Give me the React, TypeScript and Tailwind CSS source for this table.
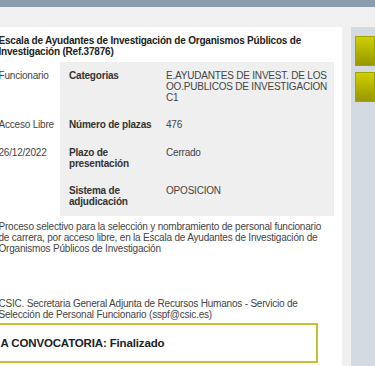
import React from 'react';

const rows = [
  { side: 'Funcionario', label: 'Categorias', value: 'E.AYUDANTES DE INVEST. DE LOS OO.PUBLICOS DE INVESTIGACION C1' },
  { side: 'Acceso Libre', label: 'Número de plazas', value: '476' },
  { side: '26/12/2022', label: 'Plazo de presentación', value: 'Cerrado' },
  { side: '', label: 'Sistema de adjudicación', value: 'OPOSICION' },
];

export default function App() {
  return (
    <div className="h-[366px] overflow-hidden bg-[#f0f0f0] font-['Liberation_Sans',Arial,sans-serif] text-[10px] leading-[11px] tracking-[-0.2px] text-[#444]">
      {/* top bar */}
      <div className="h-[7px] bg-[#8a9cad]" />

      <div className="flex pt-[20px] h-full">
        {/* main panel */}
        <div className="w-[342px] shrink-0 bg-white h-full pt-[7.5px]">
          <div className="-ml-[1.5px] w-[335px]">
            <h1 className="font-bold text-[#222] pr-[30px]">
              Escala de Ayudantes de Investigación de Organismos Públicos de Investigación (Ref.37876)
            </h1>

            <div className="mt-[5.5px]">
              {rows.map((r) => (
                <div key={r.label} className="flex">
                  <div className="w-[61.5px] shrink-0 pt-[7.5px]">{r.side}</div>
                  <div className="flex flex-1 bg-[#efefef] pt-[7.5px] pb-[9px] pl-[9px] pr-[6px]">
                    <div className="w-[97px] shrink-0 pr-[6px] font-bold text-[#333]">{r.label}</div>
                    <div className="flex-1">{r.value}</div>
                  </div>
                </div>
              ))}
            </div>

            <p className="mt-[4.5px] pr-[6px]">
              Proceso selectivo para la selección y nombramiento de personal funcionario de carrera, por acceso libre, en la
              Escala de Ayudantes de Investigación de Organismos Públicos de Investigación
            </p>

            <p className="mt-[44px] pr-[6px]">
              CSIC. Secretaria General Adjunta de Recursos Humanos - Servicio de Selección de Personal Funcionario
              (sspf@csic.es)
            </p>

            <div className="mt-[3.5px] -ml-[20px] w-[339.5px] h-[40px] border-2 border-[#c4c430] flex items-center pl-[20px]">
              <span className="font-bold text-[11.5px] tracking-[-0.15px] text-[#222]">A CONVOCATORIA: Finalizado</span>
            </div>
          </div>
        </div>

        {/* sidebar */}
        <div className="ml-[9px] flex-1 bg-[#d4dae2] h-full pt-[9px] pl-[4px] flex flex-col gap-[6px]">
          <div className="h-[30px] border border-[#a3a300] bg-gradient-to-b from-[#cfcf00] to-[#989800]" />
          <div className="h-[30px] border border-[#a3a300] bg-gradient-to-b from-[#cfcf00] to-[#989800]" />
        </div>
      </div>
    </div>
  );
}
